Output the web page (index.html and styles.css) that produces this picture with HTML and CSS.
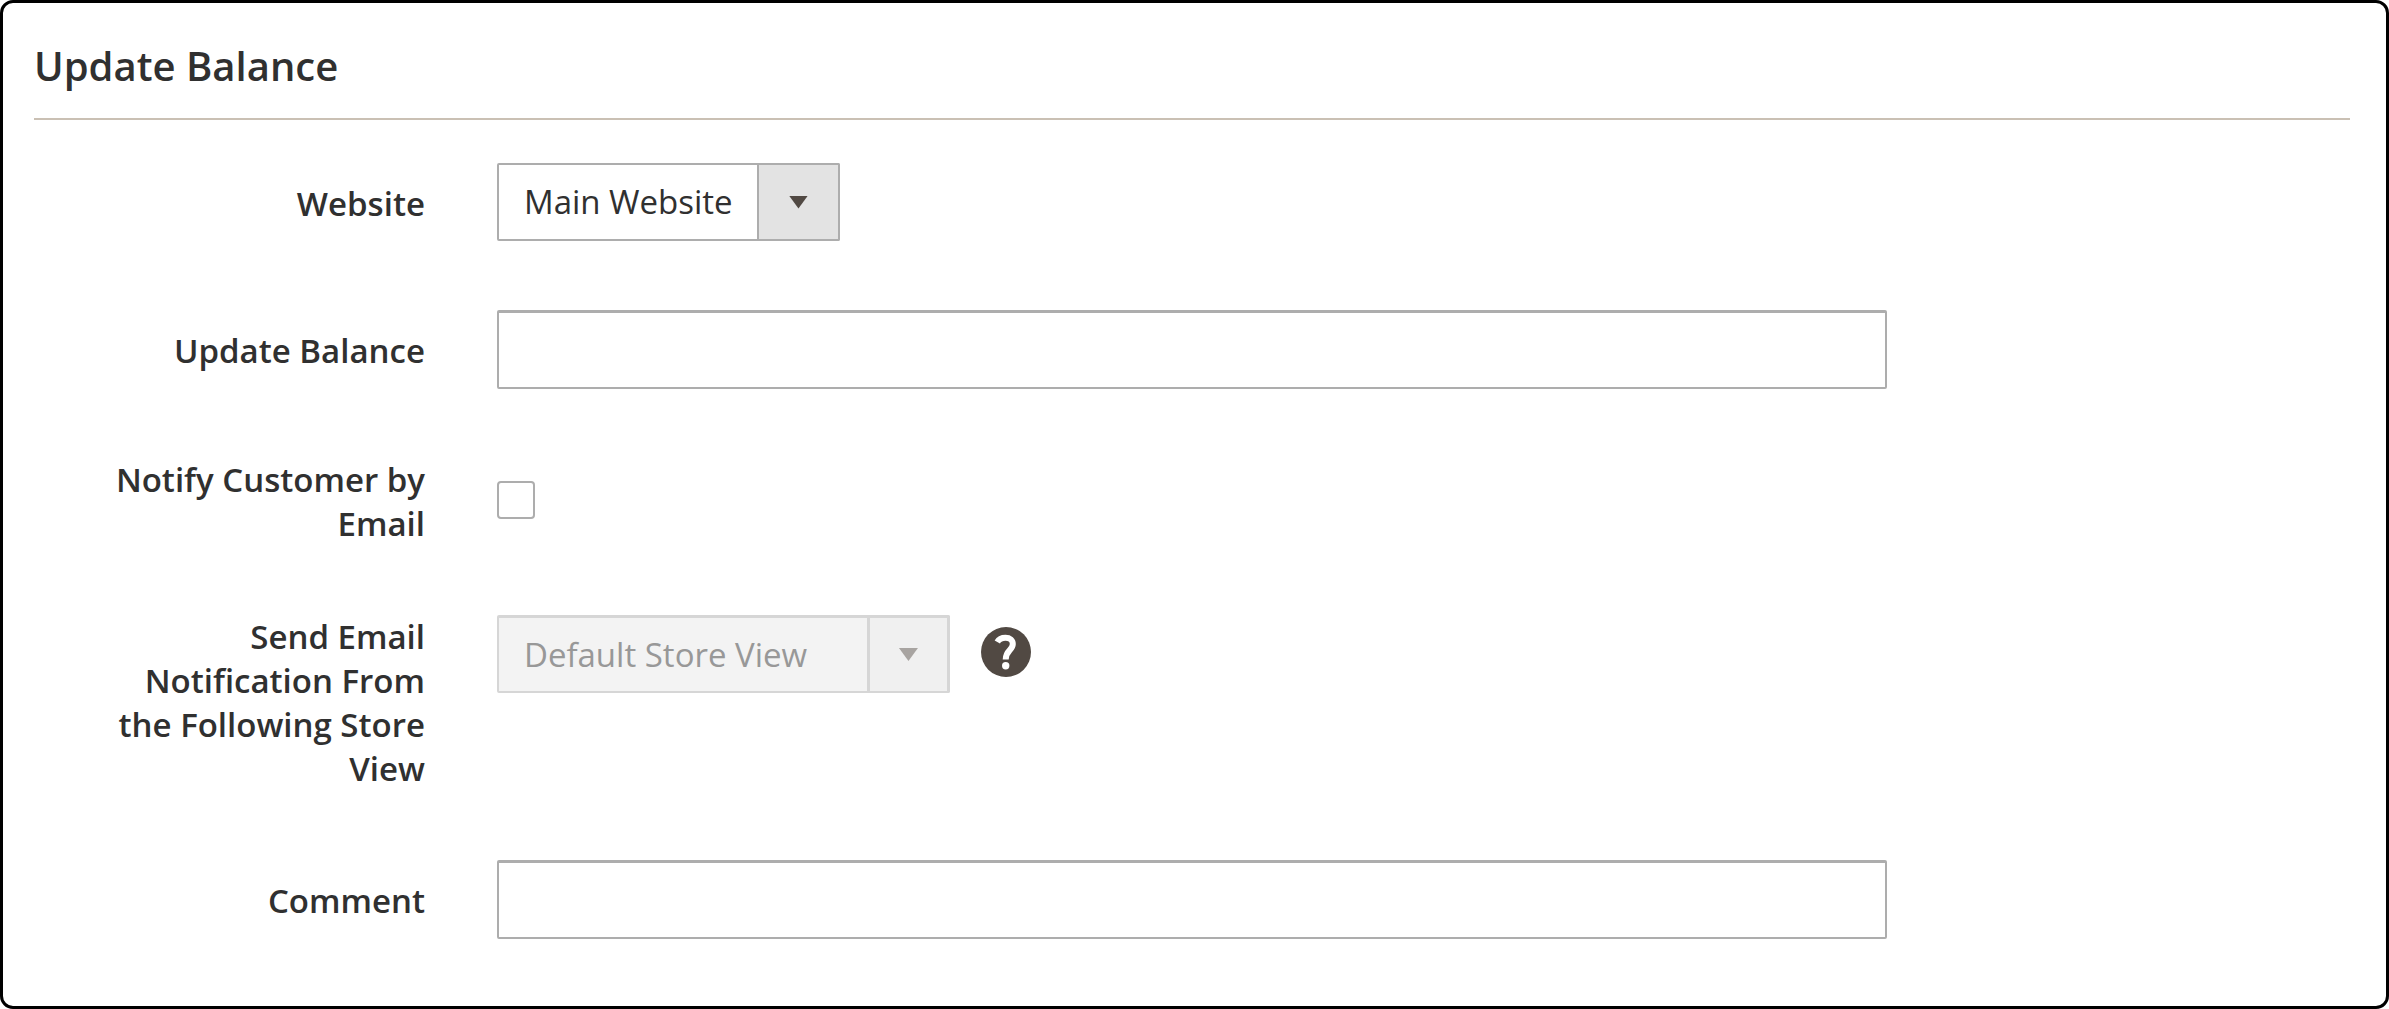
FILE: index.html
```html
<!DOCTYPE html>
<html lang="en">
<head>
<meta charset="utf-8">
<meta name="viewport" content="width=device-width, initial-scale=1">
<title>Update Balance</title>
<link rel="stylesheet" href="styles.css">
</head>
<body>
<main class="panel">
  <h1 class="panel-title">Update Balance</h1>
  <form class="fields">
    <div class="field">
      <label class="label" for="website">Website</label>
      <div class="control">
        <div class="select">
          <select id="website"><option>Main Website</option></select>
          <span class="select-arrow"></span>
        </div>
      </div>
    </div>
    <div class="field">
      <label class="label" for="amount">Update Balance</label>
      <input class="text-input" id="amount" type="text">
    </div>
    <div class="field field-long">
      <label class="label" for="notify">Notify Customer by Email</label>
      <input class="checkbox" id="notify" type="checkbox">
    </div>
    <div class="field field-long">
      <label class="label" for="store">Send Email Notification From the Following Store View</label>
      <div class="control">
        <div class="select select-disabled">
          <select id="store" disabled><option>Default Store View</option></select>
          <span class="select-arrow"></span>
        </div>
        <button class="help" type="button" aria-label="Help">
          <svg viewBox="0 0 50 50" width="50" height="50" aria-hidden="true">
            <circle cx="25" cy="25" r="25" fill="#514943"/>
            <path d="M16.300 15C18 11.800 21 10.700 24.500 10.700C29 10.700 31.800 13.200 31.800 17C31.800 23.500 24.700 23 24.700 32.500" fill="none" stroke="#fff" stroke-width="6"/>
            <circle cx="24.700" cy="38.800" r="3.700" fill="#fff"/>
          </svg>
        </button>
      </div>
    </div>
    <div class="field">
      <label class="label" for="comment">Comment</label>
      <input class="text-input" id="comment" type="text">
    </div>
  </form>
</main>
</body>
</html>
```
FILE: styles.css
```css
* {
  box-sizing: border-box;
}

body {
  margin: 0;
  background: #fff;
  color: #303030;
  font-family: "Open Sans", "Noto Sans", sans-serif;
  font-size: 33px;
  line-height: 44px;
}

.panel {
  min-height: 100vh;
  padding: 35px 36px 67px 31px;
  border: 3px solid #000;
  border-radius: 13px;
}

.panel-title {
  margin: 0 0 43px;
  padding-bottom: 24px;
  border-bottom: 2px solid #cac0b4;
  font-size: 40px;
  font-weight: 600;
  line-height: 56px;
}

.fields {
  display: grid;
  gap: 69px;
}

.field {
  display: grid;
  grid-template-columns: 9fr 32fr 9fr;
  column-gap: 72px;
  align-items: start;
}

.label {
  padding: 19px 0 0 60px;
  font-weight: 600;
  text-align: right;
}

.field-long .label {
  padding-top: 0;
}

.control {
  display: flex;
  align-items: flex-start;
  gap: 31px;
}

.text-input {
  width: 100%;
  height: 79px;
  padding: 0 25px;
  border: 2px solid #adadad;
  border-top-width: 3px;
  border-radius: 2px;
  background: #fff;
  color: inherit;
  font: inherit;
}

.select {
  display: grid;
  grid-template-columns: 1fr 83px;
  height: 78px;
}

.select select {
  grid-area: 1 / 1 / 2 / 3;
  margin: 0;
  padding: 0 105px 0 25px;
  border: 2px solid #adadad;
  border-radius: 2px;
  background: #fff;
  color: #303030;
  font: inherit;
  appearance: none;
}

.select-arrow {
  grid-area: 1 / 2 / 2 / 3;
  display: grid;
  place-items: center;
  border: 2px solid #adadad;
  border-radius: 0 2px 2px 0;
  background: #e3e3e3;
  pointer-events: none;
}

.select-arrow::before {
  content: "";
  width: 19px;
  height: 13px;
  background: #514943;
  clip-path: polygon(0 0, 100% 0, 50% 100%);
}

.select-disabled select {
  min-width: 453px;
  border-color: #d6d6d6;
  border-top-width: 3px;
  background: #f3f3f3;
  color: #989898;
  opacity: 1;
}

.select-disabled .select-arrow {
  border-color: #d6d6d6;
  border-width: 3px 3px 2px;
  background: #f0f0f0;
}

.select-disabled .select-arrow::before {
  background: #a8a4a1;
}

.checkbox {
  width: 38px;
  height: 38px;
  margin: 23px 0 0;
  border: 2px solid #adadad;
  border-radius: 4px;
  background: #fff;
  appearance: none;
}

.checkbox:checked {
  background: #514943;
}

.help {
  display: flex;
  margin: 12px 0 0;
  padding: 0;
  border: 0;
  background: none;
}
```
